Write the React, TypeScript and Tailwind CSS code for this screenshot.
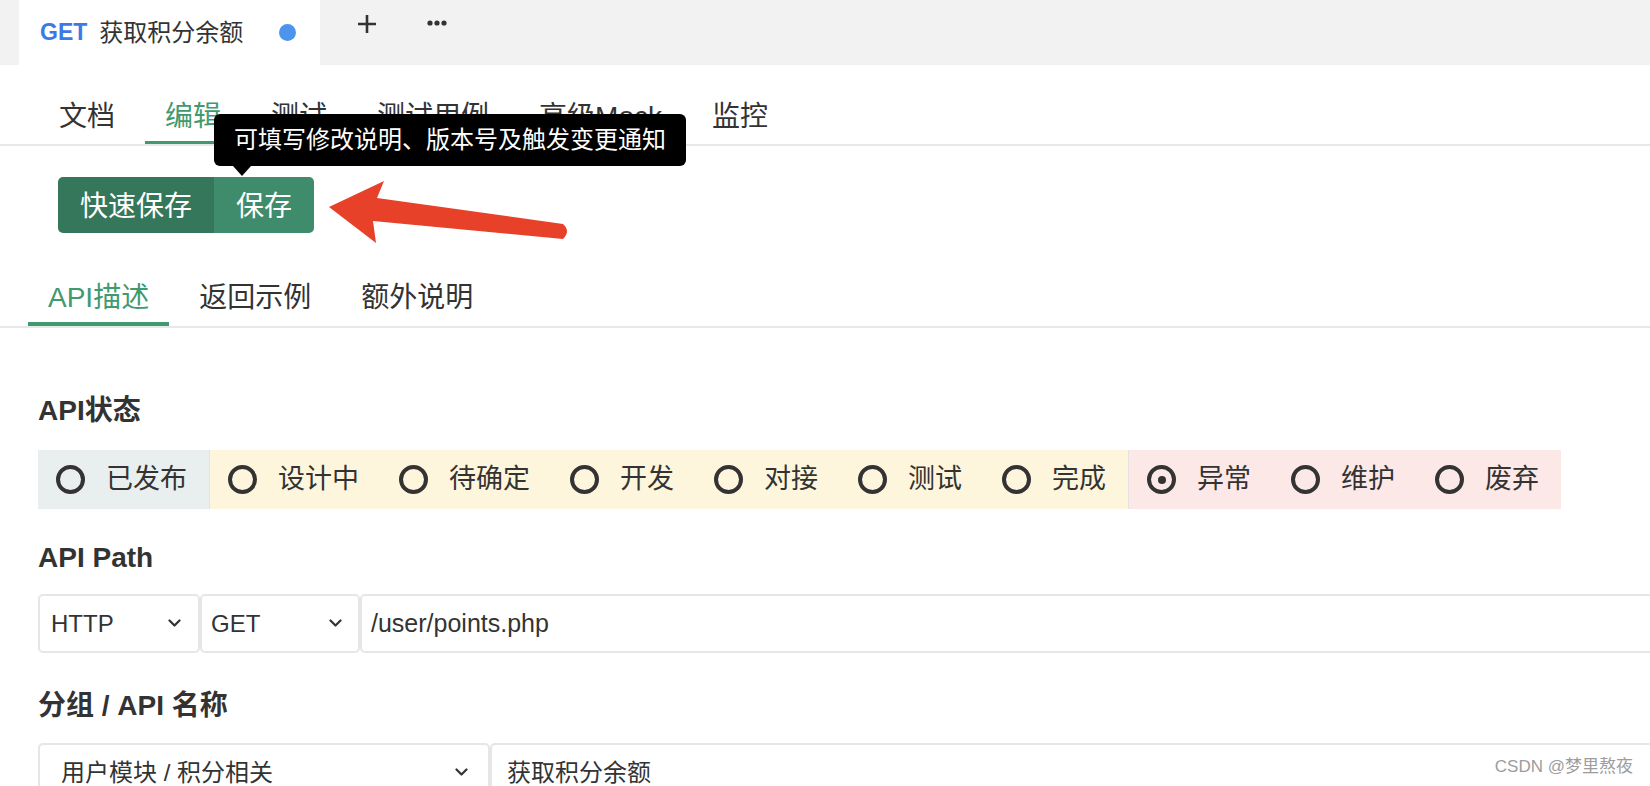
import { Fragment } from "react";

const navTabs = ["文档", "编辑", "测试", "测试用例", "高级Mock", "监控"];
const subTabs = ["API描述", "返回示例", "额外说明"];

const statusGroups = [
  { bg: "bg-[#e9efee]", items: ["已发布"] },
  { bg: "bg-[#fdf6dc]", items: ["设计中", "待确定", "开发", "对接", "测试", "完成"] },
  { bg: "bg-[#fde8e8]", items: ["异常", "维护", "废弃"] },
];

const Chevron = () => (
  <svg width="13" height="9" viewBox="0 0 13 9" className="shrink-0">
    <polyline points="1.5,1.5 6.5,6.5 11.5,1.5" fill="none" stroke="#333" strokeWidth="2.2" strokeLinecap="round" strokeLinejoin="round" />
  </svg>
);

const Radio = ({ checked }: { checked?: boolean }) => (
  <span className="flex h-[29px] w-[29px] shrink-0 items-center justify-center rounded-full border-4 border-[#333]">
    {checked && <span className="h-[8px] w-[8px] rounded-full bg-[#333]" />}
  </span>
);

const App = () => {
  return (
    <div className="relative h-[786px] w-full overflow-hidden bg-white font-['Liberation_Sans','Noto_Sans_CJK_SC',sans-serif] text-[#333]">
      {/* file tabs */}
      <div className="flex h-[65px] bg-[#f2f2f2]">
        <div className="ml-[19px] flex w-[301px] items-center bg-white pl-[21px]">
          <span className="text-[23px] font-bold text-[#3b7ae6]">GET</span>
          <span className="ml-[12px] text-[24px]">获取积分余额</span>
          <span className="ml-auto mr-[24px] h-[17px] w-[17px] rounded-full bg-[#4d94ec]" />
        </div>
        <div className="flex items-start gap-[50px] pl-[37px] pt-[14px]">
          <svg width="20" height="20" viewBox="0 0 20 20">
            <path d="M10 1v18M1 10h18" stroke="#333" strokeWidth="2.6" />
          </svg>
          <svg width="20" height="6" viewBox="0 0 20 6" className="mt-[6px]">
            <circle cx="3" cy="3" r="2.6" fill="#333" />
            <circle cx="10" cy="3" r="2.6" fill="#333" />
            <circle cx="17" cy="3" r="2.6" fill="#333" />
          </svg>
        </div>
      </div>

      {/* main nav */}
      <div className="flex gap-[10px] border-b-2 border-[#e8e8e8] pl-[39px]">
        {navTabs.map((t) => (
          <div
            key={t}
            className={`border-b-[3px] px-[20px] pb-[10px] pt-[38px] text-[28px] leading-[28px] ${
              t === "编辑" ? "border-[#41996f] text-[#41996f]" : "border-transparent"
            }`}
          >
            {t}
          </div>
        ))}
      </div>

      {/* save buttons */}
      <div className="ml-[58px] mt-[31px] flex w-fit overflow-hidden rounded-[5px] text-[28px] leading-[28px] text-white">
        <div className="bg-[#35775a] px-[22px] pb-[12px] pt-[16px]">快速保存</div>
        <div className="bg-[#3e8c6c] px-[22px] pb-[12px] pt-[16px]">保存</div>
      </div>

      {/* sub tabs */}
      <div className="mt-[34px] flex gap-[10px] border-b-2 border-[#e8e8e8] pl-[28px]">
        {subTabs.map((t, i) => (
          <div
            key={t}
            className={`border-b-4 px-[20px] pb-[10px] pt-[17px] text-[28px] leading-[28px] ${
              i === 0 ? "border-[#41996f] text-[#41996f]" : "border-transparent"
            }`}
          >
            {t}
          </div>
        ))}
      </div>

      <div className="pl-[38px]">
        <h3 className="mt-[69px] text-[28px] font-bold leading-[28px]">API状态</h3>
        <div className="mt-[25px] flex h-[59px] w-fit">
          {statusGroups.map((g, gi) => (
            <div key={gi} className={`flex ${g.bg} ${gi > 0 ? "border-l border-[#e2e2e2]" : ""}`}>
              {g.items.map((s) => (
                <div key={s} className="flex items-center gap-[21px] pl-[18px] pr-[22px] text-[27px]">
                  <Radio checked={s === "异常"} />
                  <span>{s}</span>
                </div>
              ))}
            </div>
          ))}
        </div>

        <h3 className="mt-[35px] text-[28px] font-bold leading-[28px]">API Path</h3>
        <div className="mt-[22px] flex h-[59px] w-[1660px] text-[24px]">
          <div className="flex w-[162px] items-center justify-between rounded-[5px] border-2 border-[#e6e6e6] pl-[11px] pr-[17px]">
            <span>HTTP</span>
            <Chevron />
          </div>
          <div className="flex w-[160px] items-center justify-between rounded-[5px] border-2 border-[#e6e6e6] pl-[9px] pr-[16px]">
            <span>GET</span>
            <Chevron />
          </div>
          <div className="flex flex-1 items-center rounded-[5px] border-2 border-[#e6e6e6] pl-[9px] text-[25px]">
            /user/points.php
          </div>
        </div>

        <h3 className="mt-[39px] text-[28px] font-bold leading-[28px]">
          分组 / API 名称
        </h3>
        <div className="mt-[23px] flex h-[59px] w-[1660px] text-[24px]">
          <div className="flex w-[452px] items-center justify-between rounded-[5px] border-2 border-[#e6e6e6] pl-[21px] pr-[20px]">
            <span>用户模块 / 积分相关</span>
            <Chevron />
          </div>
          <div className="flex flex-1 items-center rounded-[5px] border-2 border-[#e6e6e6] pl-[15px]">
            获取积分余额
          </div>
        </div>
      </div>

      {/* tooltip */}
      <div className="absolute left-[214px] top-[114px] flex h-[52px] w-[472px] items-center justify-center rounded-[6px] bg-black text-[24px] leading-[24px] text-white">
        可填写修改说明、版本号及触发变更通知
        <span className="absolute left-[19px] top-full h-0 w-0 border-x-[9px] border-t-[10px] border-x-transparent border-t-black" />
      </div>

      {/* annotation arrow */}
      <svg className="absolute left-[320px] top-[170px]" width="260" height="80" viewBox="0 0 260 80">
        <path d="M9,37 L64,11 L57,28 L243,54 Q251,61 243,69 L53,51 L56,73 Z" fill="#e8412a" />
      </svg>

      <div className="absolute bottom-[7px] right-[17px] text-[17px] text-[#9d9d9d]">
        CSDN @梦里熬夜
      </div>
    </div>
  );
};

export default App;
